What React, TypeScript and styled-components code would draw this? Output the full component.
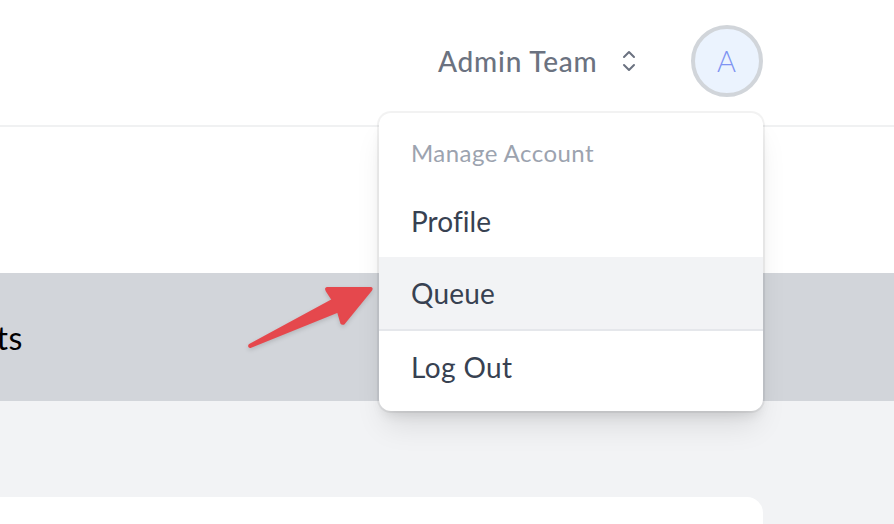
import React from "react";
import styled, { createGlobalStyle } from "styled-components";

const GlobalStyle = createGlobalStyle`
  *, *::before, *::after { box-sizing: border-box; }
  body { margin: 0; background: #f2f3f5; overflow: hidden; font-family: "Lato", "Liberation Sans", sans-serif; }
`;

const Page = styled.div`
  position: relative;
  width: 894px;
  height: 524px;
  overflow: hidden;
  background: #f2f3f5;
`;

const NavBar = styled.nav`
  display: flex;
  justify-content: flex-end;
  align-items: center;
  height: 127px;
  padding: 0 131px 3px 0;
  background: #fff;
  border-bottom: 2px solid #f0f1f2;
`;

const TeamButton = styled.button`
  display: flex;
  align-items: center;
  gap: 16px;
  width: 253px;
  padding: 0;
  border: 0;
  background: none;
  color: #6b7280;
  font: 500 28px/40px "Lato", sans-serif;
`;

const Label = styled.span<{ $spacing: number }>`
  letter-spacing: ${(p) => p.$spacing}px;
  white-space: nowrap;
`;

const TeamName = styled(Label)`
  width: 159px;
  text-align: left;
`;

const Avatar = styled.div`
  display: flex;
  align-items: center;
  justify-content: center;
  width: 72px;
  height: 72px;
  padding-right: 1px;
  border: 4px solid #d1d5da;
  border-radius: 50%;
  background: #ebf3fe;
  color: #7f93f2;
  font-size: 29px;
  font-weight: 300;
  line-height: 40px;
`;

const PageHeader = styled.header`
  height: 146px;
  background: #fff;
`;

const Banner = styled.section`
  display: flex;
  align-items: center;
  height: 128px;
  padding-top: 2px;
  background: #d2d5da;
  color: #000;
  font-size: 32px;
  line-height: 48px;
`;

const BannerText = styled.span`
  display: flex;
  justify-content: flex-end;
  width: 23px;
  white-space: nowrap;
  letter-spacing: 0.6px;
`;

const Card = styled.section`
  width: 763px;
  height: 80px;
  margin-top: 96px;
  border-radius: 0 16px 0 0;
  background: #fff;
`;

const Menu = styled.div`
  position: absolute;
  top: 113px;
  right: 131px;
  width: 384px;
  padding: 8px 0;
  border-radius: 12px;
  background: #fff;
  box-shadow: 0 0 0 2px rgba(0, 0, 0, 0.05), 0 20px 30px -6px rgba(0, 0, 0, 0.1),
    0 8px 12px -4px rgba(0, 0, 0, 0.1);
`;

const MenuHeading = styled.div`
  padding: 16px 32px;
  color: #9ca3af;
  font-size: 24px;
  line-height: 32px;
`;

const MenuItem = styled.a<{ $active?: boolean }>`
  display: block;
  padding: 16px 32px;
  background: ${(p) => (p.$active ? "#f2f3f5" : "transparent")};
  color: #374151;
  font-size: 28px;
  line-height: 40px;
`;

const Divider = styled.div`
  height: 2px;
  background: #e5e7eb;
`;

const Pointer = styled.svg`
  position: absolute;
  top: 270px;
  left: 235px;
  filter: drop-shadow(0 2px 2px rgba(0, 0, 0, 0.14));
`;

export default function App() {
  return (
    <Page>
      <GlobalStyle />
      <NavBar>
        <TeamButton>
          <TeamName $spacing={0.8}>Admin Team</TeamName>
          <svg width="32" height="32" viewBox="0 0 24 24" fill="none" stroke="currentColor" strokeWidth="1.5" strokeLinecap="round" strokeLinejoin="round">
            <path d="M8.25 15 12 18.75 15.75 15M8.25 9 12 5.25 15.75 9" />
          </svg>
        </TeamButton>
        <Avatar>A</Avatar>
      </NavBar>
      <PageHeader />
      <Banner>
        <BannerText>ts</BannerText>
      </Banner>
      <Card />
      <Menu>
        <MenuHeading>
          <Label $spacing={0.45}>Manage Account</Label>
        </MenuHeading>
        <MenuItem>
          <Label $spacing={0.05}>Profile</Label>
        </MenuItem>
        <MenuItem $active>
          <Label $spacing={0.2}>Queue</Label>
        </MenuItem>
        <Divider />
        <MenuItem>
          <Label $spacing={0.4}>Log Out</Label>
        </MenuItem>
      </Menu>
      <Pointer width="144" height="90" viewBox="0 0 144 90">
        <path
          d="M14.6 74.8 97.6 30 91.6 20.6Q90.2 18 92.6 18H135.6Q137.2 18 136.3 19.8L109.2 53.2Q107.6 54.6 106.3 53L103 41.6 15.2 77Q13.4 76.6 14.6 74.8Z"
          fill="#e5484d"
          stroke="#e5484d"
          strokeWidth="2"
          strokeLinejoin="round"
        />
      </Pointer>
    </Page>
  );
}
